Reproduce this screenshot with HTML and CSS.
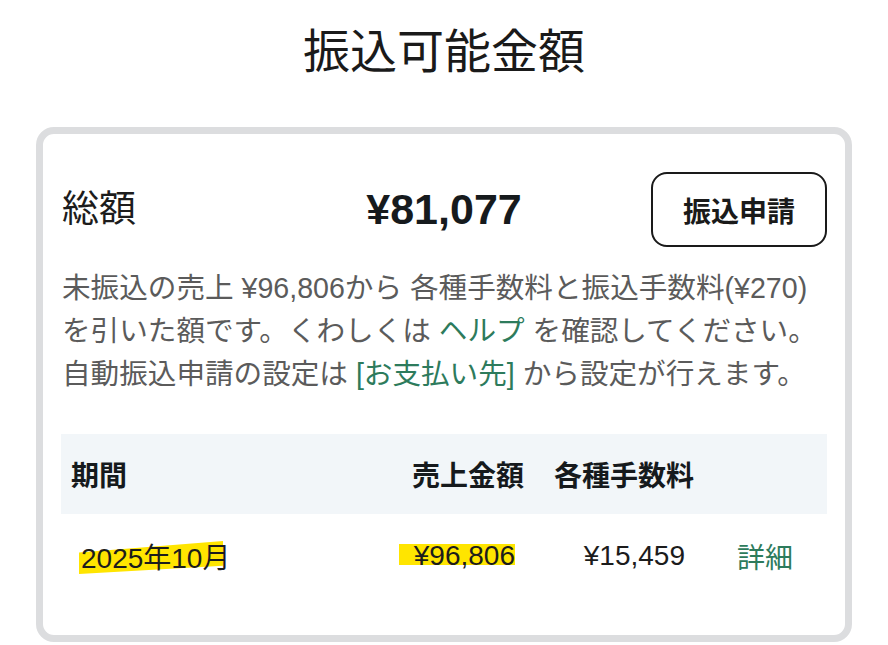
FILE: index.html
```html
<!DOCTYPE html>
<html lang="ja">
<head>
<meta charset="utf-8">
<link rel="stylesheet" href="styles.css">
</head>
<body>
<h1 class="title">振込可能金額</h1>
<section class="card">
  <div class="total-row">
    <div class="total-label">総額</div>
    <div class="total-amount">¥81,077</div>
    <div class="total-action"><button class="apply-btn">振込申請</button></div>
  </div>
  <p class="desc">未振込の売上 ¥96,806から 各種手数料と振込手数料(¥270)<br>を引いた額です。くわしくは <a class="link">ヘルプ</a> を確認してください。<br>自動振込申請の設定は <a class="link">[お支払い先]</a> から設定が行えます。</p>
  <div class="table">
    <div class="th th-period">期間</div>
    <div class="th th-num">売上金額</div>
    <div class="th th-num">各種手数料</div>
    <div class="th"></div>
    <div class="td td-period"><span class="mark mark-date"></span><span class="txt">2025年10月</span></div>
    <div class="td td-num"><span class="mark mark-amount"></span><span class="txt">¥96,806</span></div>
    <div class="td td-num"><span class="txt">¥15,459</span></div>
    <div class="td td-detail"><a class="link">詳細</a></div>
  </div>
</section>
</body>
</html>
```
FILE: styles.css
```css
html, body {
  margin: 0;
  padding: 0;
  background: #ffffff;
}
body {
  font-family: "Liberation Sans", "Noto Sans CJK JP", sans-serif;
  color: #1c1c1c;
  width: 888px;
  height: 645px;
  overflow: hidden;
}
.title {
  margin: 22px 0 0;
  height: 60px;
  line-height: 60px;
  font-size: 47px;
  font-weight: 400;
  text-align: center;
  color: #1a1a1a;
}
.card {
  box-sizing: border-box;
  margin: 45px 36px 0;
  border: 7px solid #dcdddf;
  border-radius: 18px;
  padding: 18px 18px 0;
  height: 515px;
}
.total-row {
  margin-top: 20px;
  display: grid;
  grid-template-columns: 1fr auto 1fr;
  align-items: center;
  height: 75px;
}
.total-label {
  font-size: 37px;
  padding-left: 1px;
  line-height: 1;
}
.total-amount {
  font-size: 43px;
  font-weight: 700;
  color: #161a1d;
  line-height: 1;
}
.total-action {
  display: flex;
  justify-content: flex-end;
}
.apply-btn {
  width: 176px;
  height: 75px;
  border: 2px solid #1a1a1a;
  border-radius: 16px;
  background: #ffffff;
  font-family: "Liberation Sans", "Noto Sans CJK JP", sans-serif;
  font-size: 28px;
  font-weight: 700;
  color: #1a1a1a;
  padding: 0;
}
.desc {
  margin: 20px 0 0;
  font-size: 28.6px;
  line-height: 43px;
  color: #5b5b5b;
  padding-left: 1px;
  white-space: nowrap;
}
.link {
  color: #2d7b5c;
  text-decoration: none;
}
.table {
  margin-top: 38px;
  display: grid;
  grid-template-columns: 1fr 140px 170px 131px;
  grid-template-rows: 80px 84px;
}
.th {
  background: #f2f6f9;
  font-size: 28px;
  font-weight: 700;
  color: #161a1d;
  display: flex;
  align-items: center;
}
.th-period {
  padding-left: 10px;
}
.th-num {
  justify-content: flex-end;
  padding-right: 2px;
}
.td {
  font-size: 28px;
  color: #1c1c1c;
  display: flex;
  align-items: center;
  position: relative;
}
.td-period {
  padding-left: 20px;
}
.td-num {
  justify-content: flex-end;
  padding-right: 11px;
}
.td-detail {
  padding-left: 41px;
}
.txt {
  position: relative;
}
.mark {
  position: absolute;
  background: #ffe500;
}
.mark-date {
  left: 18px;
  top: 27px;
  width: 144px;
  height: 33px;
  clip-path: polygon(0 35%, 100% 0, 100% 75%, 0 100%);
}
.mark-amount {
  right: 11px;
  top: 30px;
  width: 116px;
  height: 21px;
}
```
